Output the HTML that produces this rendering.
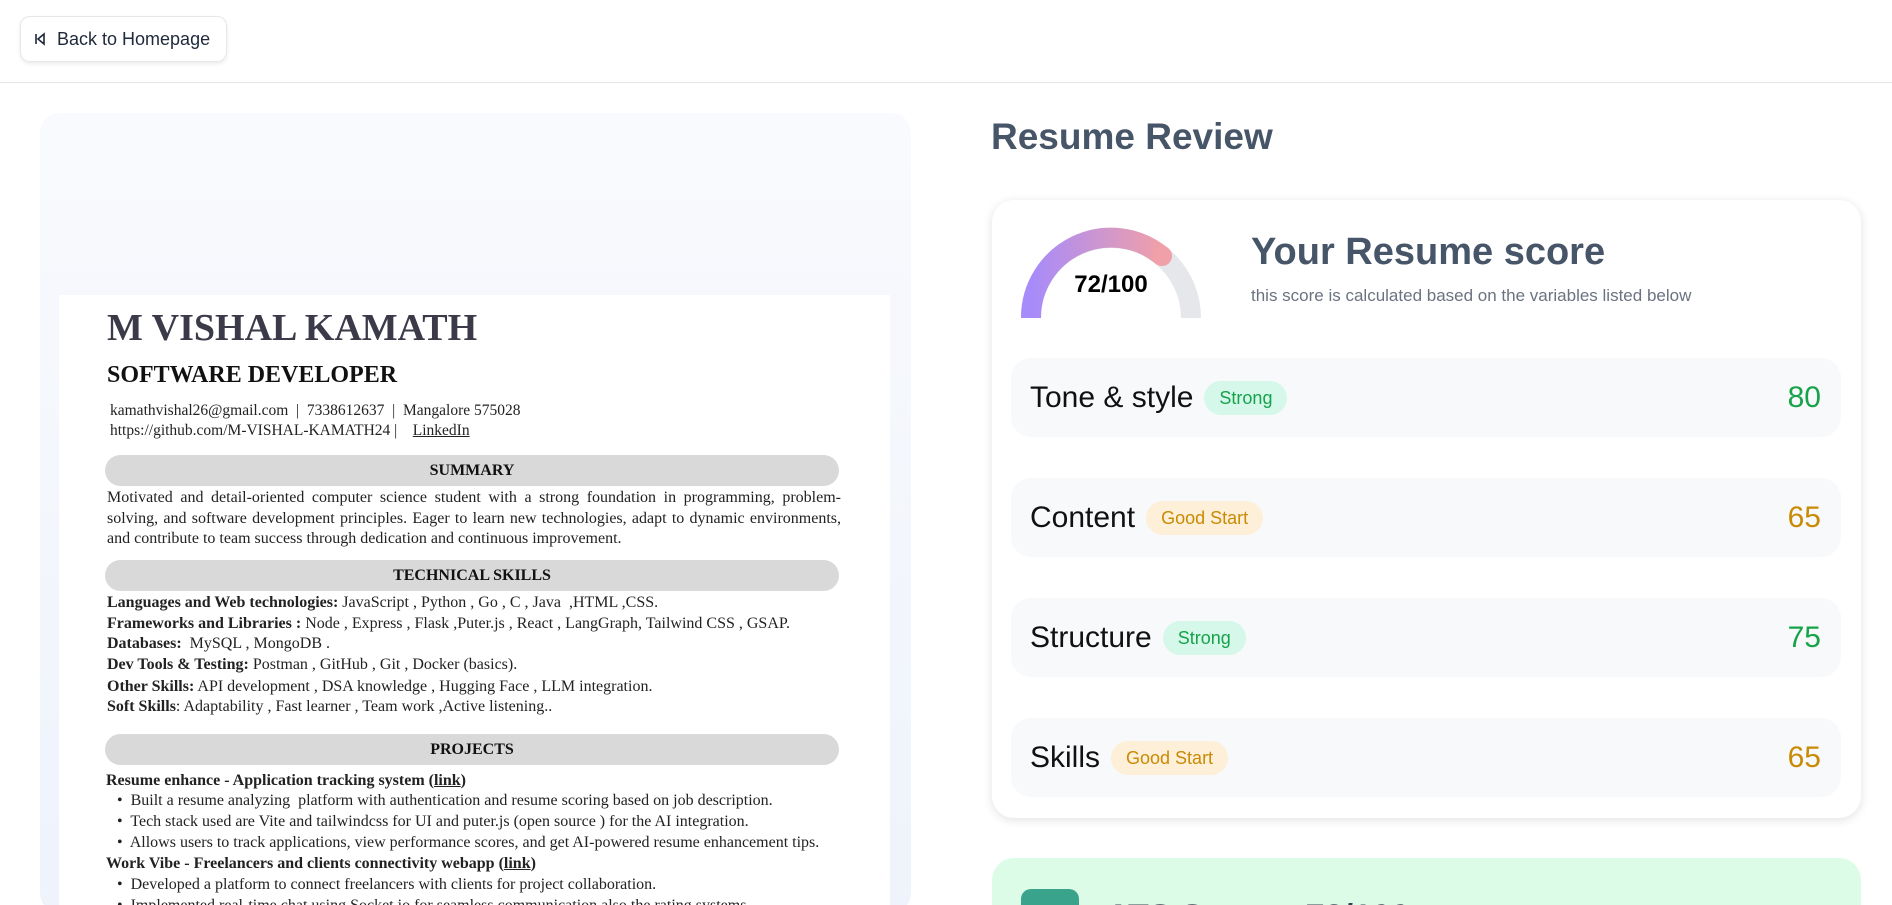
<!DOCTYPE html>
<html><head><meta charset="utf-8"><style>
*{margin:0;padding:0;box-sizing:border-box}
html,body{width:1892px;height:905px;overflow:hidden}
body{background:#fff;font-family:"Liberation Sans",sans-serif;position:relative}
.clip{position:absolute;left:0;top:0;width:1892px;height:905px;overflow:hidden}
.a{position:absolute}
.hdr{left:0;top:0;width:1892px;height:83px;border-bottom:1px solid #e5e7eb}
.back{left:20px;top:16px;width:207px;height:46px;border:1px solid #e5e7eb;border-radius:10px;box-shadow:0 2px 4px rgba(0,0,0,.08);display:flex;align-items:center;padding-left:12px;font-size:18px;color:#1e293b}
.left{left:40px;top:113px;width:871px;height:800px;border-radius:20px;background:linear-gradient(#f9fafd,#eef3fc)}
.paper{left:59px;top:295px;width:831px;height:620px;background:#fff}
.t{position:absolute;left:107px;font-family:"Liberation Serif",serif;font-size:16px;color:#222;white-space:nowrap}
.bar{position:absolute;left:105px;width:734px;height:31px;background:#d9d9d9;border-radius:16px;text-align:center;font-family:"Liberation Serif",serif;font-weight:bold;font-size:16px;line-height:31px;color:#111}
.card{left:992px;top:200px;width:869px;height:618px;border-radius:22px;background:#fff;box-shadow:0 2px 10px rgba(0,0,0,.12)}
.row{position:absolute;left:1011px;width:830px;height:79px;background:#f8f9fb;border-radius:20px}
.lbl{position:absolute;left:19px;top:0;height:79px;display:flex;align-items:center;font-size:30px;color:#111}
.badge{display:inline-block;margin-left:11px;height:34px;line-height:34px;padding:0 15px;border-radius:17px;font-size:18px}
.g{background:#d5f8ea;color:#16a34a}.o{background:#fdefd8;color:#ca8a04}
.sc{position:absolute;right:20px;top:0;line-height:79px;font-size:30px}
</style></head><body><div class="clip">
<div class="a hdr"></div>
<div class="a back"><svg width="14" height="14" viewBox="0 0 14 14" style="margin-right:10px"><path d="M3 2v10M11 2L5 7l6 5z" fill="none" stroke="#1e293b" stroke-width="1.6"/></svg>Back to Homepage</div>

<div class="a left"></div>
<div class="a paper"></div>
<div class="t" style="top:306px;font-size:38px;font-weight:bold;color:#3a3a48">M VISHAL KAMATH</div>
<div class="t" style="top:362px;font-size:24px;font-weight:bold;color:#111">SOFTWARE DEVELOPER</div>
<div class="t" style="top:402px;font-size:15.5px;left:110px">kamathvishal26@gmail.com &nbsp;| &nbsp;7338612637 &nbsp;| &nbsp;Mangalore 575028</div>
<div class="t" style="top:422px;font-size:15.5px;left:110px">https://github.com/M-VISHAL-KAMATH24 | &nbsp;&nbsp;&nbsp;<u>LinkedIn</u></div>
<div class="bar" style="top:455px">SUMMARY</div>
<div class="t" style="top:488px;width:734px;white-space:normal;text-align:justify;line-height:20.5px">Motivated and detail-oriented computer science student with a strong foundation in programming, problem-solving, and software development principles. Eager to learn new technologies, adapt to dynamic environments, and contribute to team success through dedication and continuous improvement.</div>
<div class="bar" style="top:560px">TECHNICAL SKILLS</div>
<div class="t" style="top:594px"><b>Languages and Web technologies:</b> JavaScript , Python , Go , C , Java &nbsp;,HTML ,CSS.</div>
<div class="t" style="top:615px"><b>Frameworks and Libraries :</b> Node , Express , Flask ,Puter.js , React , LangGraph, Tailwind CSS , GSAP.</div>
<div class="t" style="top:635px"><b>Databases:</b> &nbsp;MySQL , MongoDB .</div>
<div class="t" style="top:656px"><b>Dev Tools &amp; Testing:</b> Postman , GitHub , Git , Docker (basics).</div>
<div class="t" style="top:678px"><b>Other Skills:</b> API development , DSA knowledge , Hugging Face , LLM integration.</div>
<div class="t" style="top:698px"><b>Soft Skills</b>: Adaptability , Fast learner , Team work ,Active listening..</div>
<div class="bar" style="top:734px">PROJECTS</div>
<div class="t" style="top:772px;left:106px"><b>Resume enhance - Application tracking system (<u>link</u>)</b></div>
<div class="t" style="top:792px;left:117px">•&nbsp; Built a resume analyzing &nbsp;platform with authentication and resume scoring based on job description.</div>
<div class="t" style="top:813px;left:117px">•&nbsp; Tech stack used are Vite and tailwindcss for UI and puter.js (open source ) for the AI integration.</div>
<div class="t" style="top:834px;left:117px">•&nbsp; Allows users to track applications, view performance scores, and get AI-powered resume enhancement tips.</div>
<div class="t" style="top:855px;left:106px"><b>Work Vibe - Freelancers and clients connectivity webapp (<u>link</u>)</b></div>
<div class="t" style="top:876px;left:117px">•&nbsp; Developed a platform to connect freelancers with clients for project collaboration.</div>
<div class="t" style="top:897px;left:117px">•&nbsp; Implemented real-time chat using Socket.io for seamless communication also the rating systems.</div>

<div class="a" style="left:991px;top:116px;font-size:37px;font-weight:bold;color:#475569">Resume Review</div>
<div class="a card"></div>
<svg class="a" style="left:1011px;top:218px" width="200" height="110" viewBox="0 0 200 110">
<defs><linearGradient id="gr" x1="0" x2="1"><stop offset="0" stop-color="#a78bfa"/><stop offset="1" stop-color="#f0a0a8"/></linearGradient></defs>
<path d="M20 100A80 80 0 0 1 180 100" fill="none" stroke="#e5e7eb" stroke-width="20"/>
<path d="M20 100A80 80 0 0 1 151 38" fill="none" stroke="url(#gr)" stroke-width="20"/>
<circle cx="151" cy="38" r="10" fill="#f0a0a8"/>
</svg>
<div class="a" style="left:1061px;top:271px;width:100px;text-align:center;font-size:24px;font-weight:bold;color:#000">72/100</div>
<div class="a" style="left:1251px;top:231px;font-size:38px;font-weight:bold;color:#475569">Your Resume score</div>
<div class="a" style="left:1251px;top:286px;font-size:17px;color:#6b7280">this score is calculated based on the variables listed below</div>

<div class="row" style="top:358px"><div class="lbl">Tone &amp; style<span class="badge g">Strong</span></div><div class="sc" style="color:#16a34a">80</div></div>
<div class="row" style="top:478px"><div class="lbl">Content<span class="badge o">Good Start</span></div><div class="sc" style="color:#ca8a04">65</div></div>
<div class="row" style="top:598px"><div class="lbl">Structure<span class="badge g">Strong</span></div><div class="sc" style="color:#16a34a">75</div></div>
<div class="row" style="top:718px"><div class="lbl">Skills<span class="badge o">Good Start</span></div><div class="sc" style="color:#ca8a04">65</div></div>

<div class="a" style="left:992px;top:858px;width:869px;height:47px;border-radius:22px 22px 0 0;background:#dcfce7"></div>
<div class="a" style="left:1021px;top:889px;width:58px;height:16px;border-radius:10px 10px 0 0;background:#3aa38b"></div>
<div class="a" style="left:1106px;top:900px;font-size:34px;font-weight:bold;color:#374151;line-height:34px">ATS Score - 72/100</div>
</div></body></html>
